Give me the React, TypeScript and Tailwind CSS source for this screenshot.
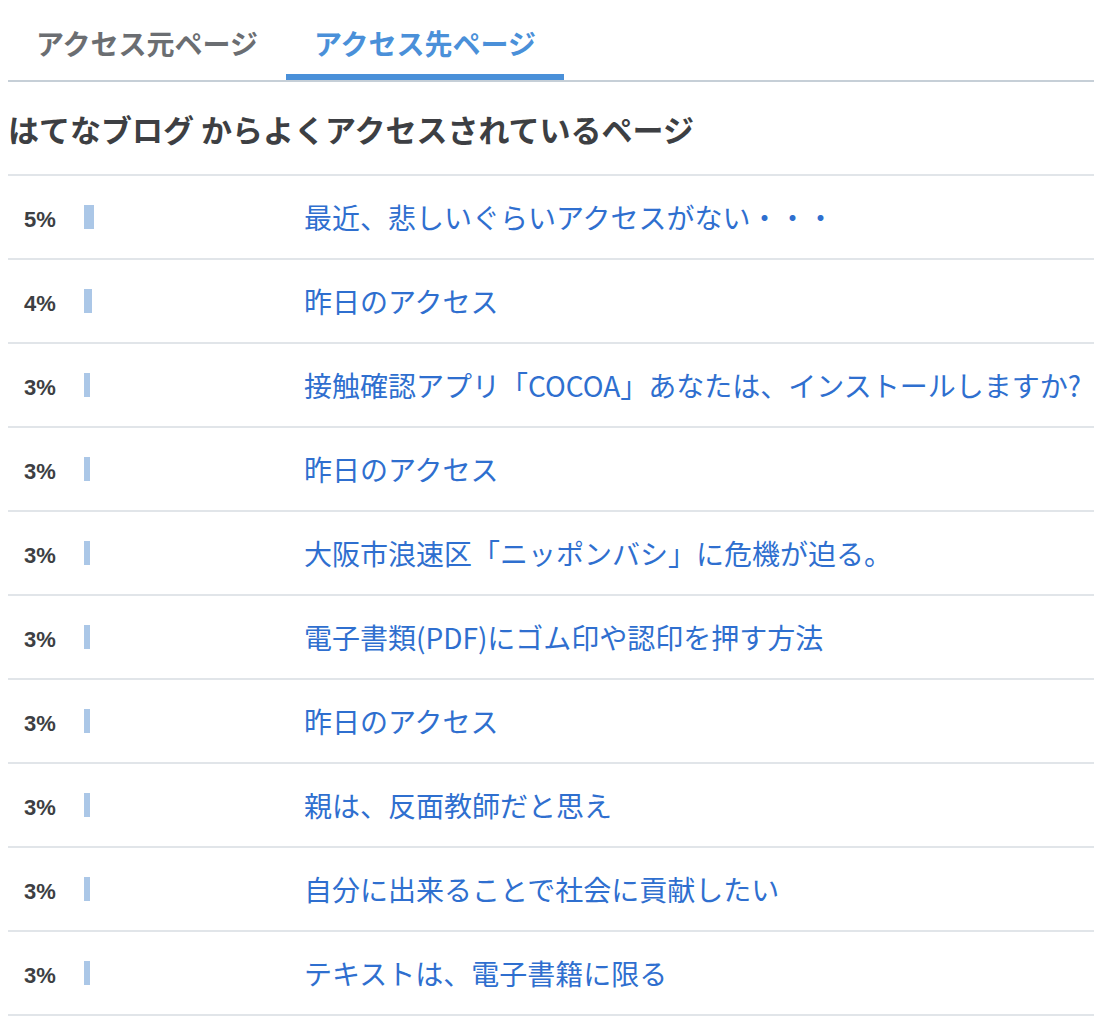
import React from 'react'

const rows = [
  { pct: 5, title: '最近、悲しいぐらいアクセスがない・・・' },
  { pct: 4, title: '昨日のアクセス' },
  { pct: 3, title: '接触確認アプリ「COCOA」あなたは、インストールしますか?' },
  { pct: 3, title: '昨日のアクセス' },
  { pct: 3, title: '大阪市浪速区「ニッポンバシ」に危機が迫る。' },
  { pct: 3, title: '電子書類(PDF)にゴム印や認印を押す方法' },
  { pct: 3, title: '昨日のアクセス' },
  { pct: 3, title: '親は、反面教師だと思え' },
  { pct: 3, title: '自分に出来ることで社会に貢献したい' },
  { pct: 3, title: 'テキストは、電子書籍に限る' },
]

function App() {
  return (
    <div
      className="min-h-screen bg-white pl-2"
      style={{ fontFamily: '"Noto Sans CJK JP", "Liberation Sans", sans-serif' }}
    >
      {/* タブ */}
      <div className="flex border-b-2 border-[#c6cfd7]">
        <div className="flex h-[80px] w-[278px] items-center justify-center border-b-[6px] border-transparent pt-[12px] text-[28px] font-bold text-[#6b6e72]">
          アクセス元ページ
        </div>
        <div className="flex h-[80px] w-[278px] items-center justify-center border-b-[6px] border-[#4a90d9] pt-[12px] text-[28px] font-bold text-[#4a90d9]">
          アクセス先ページ
        </div>
      </div>
      {/* 見出し */}
      <h2 className="flex h-[94px] items-center border-b-2 border-[#e1e5e9] pt-[2px] text-[31px] font-bold text-[#3d3f43]">
        はてなブログ からよくアクセスされているページ
      </h2>
      {/* 一覧 */}
      <ul>
        {rows.map((row, idx) => (
          <li
            key={idx}
            className="flex h-[84px] items-center border-b-2 border-[#e1e5e9]"
          >
            <span
              className="w-[76px] pl-4 pt-[4px] text-[22px] font-bold text-[#3d3f43]"
              style={{ fontFamily: '"Liberation Sans", sans-serif' }}
            >
              {row.pct}%
            </span>
            <div className="w-[220px]">
              <div
                className="h-6 bg-[#abc7e7]"
                style={{ width: row.pct * 2 }}
              />
            </div>
            <a className="text-[28px] text-[#2f6fcf]">{row.title}</a>
          </li>
        ))}
      </ul>
    </div>
  )
}

export default App
